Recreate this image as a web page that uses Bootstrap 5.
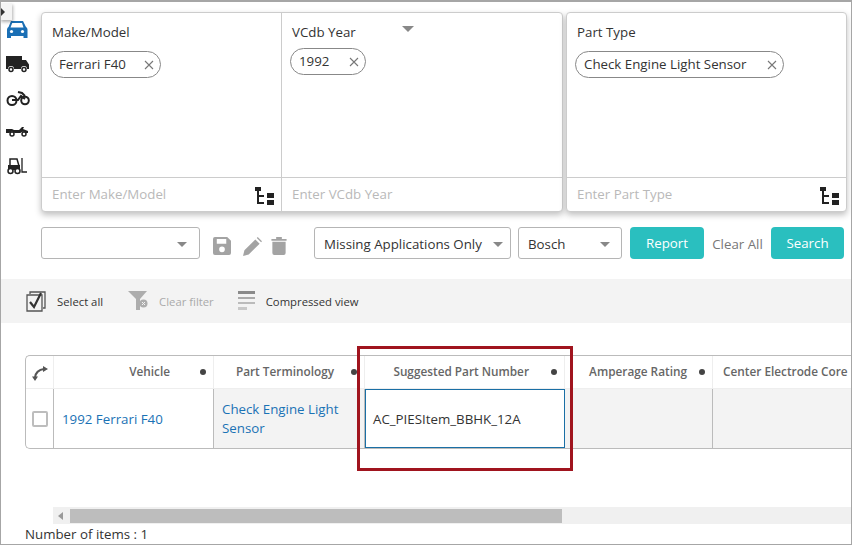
<!DOCTYPE html>
<html lang="en">
<head>
  <meta charset="UTF-8">
  <title>Vehicle Part Search</title>
  <link href="https://cdn.jsdelivr.net/npm/bootstrap@5.3.3/dist/css/bootstrap.min.css" rel="stylesheet">
  <style>
    html,body{height:100%;overflow:hidden;}
    body{background:#fff;font-family:"Open Sans","Liberation Sans",sans-serif;font-size:13.3px;color:#333;}
    .app-frame{position:relative;width:852px;height:545px;border:1px solid #a6a6a6;border-top-width:2px;overflow:hidden;}
    .side-tab{position:absolute;left:-1px;top:1px;width:12px;height:17px;background:#f4f4f4;box-shadow:1px 2px 3px rgba(0,0,0,.3);}
    .top-area{padding-top:10px;height:210px;}
    .side-rail{width:40px;flex:none;padding-top:8px;}
    .rail-icon{height:34px;padding-left:5px;}
    .picker-card{height:200px;border:1px solid #ccc;border-radius:4px;box-shadow:0 3px 6px rgba(0,0,0,.25);background:#fff;}
    .card-one{width:522px;}
    .card-two{width:281px;margin-left:3px;}
    .picker-col{display:flex;flex-direction:column;height:100%;}
    .col-make{width:240px;border-right:1px solid #ccc;}
    .col-year{width:280px;}
    .col-part{width:100%;}
    .picker-body{flex:1;padding:9px 8px 0;}
    .picker-label{color:#333;line-height:20px;padding-left:2px;height:20px;}
    .year-label{width:110px;}
    .caret-down{width:0;height:0;border-left:6px solid transparent;border-right:6px solid transparent;border-top:6px solid #888;margin-top:4px;}
    .chip{display:inline-flex;align-items:center;justify-content:space-between;height:27px;border:1px solid #888;border-radius:14px;padding:0 6px 0 8px;color:#333;margin-top:9px;line-height:1;}
    .chip-year{margin-top:6px;}
    .chip-make{width:111px;}
    .chip-y{width:76px;}
    .chip-type{width:209px;}
    .picker-foot{height:34px;border-top:1px solid #ccc;padding:0 7px 0 10px;}
    .picker-foot input{border:0;outline:0;padding:0;flex:1;min-width:0;font-size:13.3px;background:transparent;}
    .picker-foot input::placeholder{color:#b9b9b9;opacity:1;}
    .tree-icon{margin-top:2px;}
    .tool-row{margin-top:15px;height:32px;padding-left:40px;}
    .plain-select{height:32px;font-size:13.3px;color:#333;border:1px solid #b5b5b5;border-radius:3px;padding:3px 20px 0 9px;background-image:none;}
    .select-wrap{position:relative;}
    .select-wrap::after{content:"";position:absolute;top:15px;border-left:5px solid transparent;border-right:5px solid transparent;border-top:5px solid #888;pointer-events:none;}
    .sel-saved{width:159px;}
    .sel-saved::after{right:13px;}
    .sel-missing{width:197px;}
    .sel-missing::after{right:8px;}
    .sel-brand{width:104px;margin-left:7px;}
    .sel-brand::after{right:12px;}
    .icon-set{width:114px;padding:6px 0 0 13px;}
    .tool-pencil{margin-left:12px;}
    .tool-trash{margin-left:9px;}
    .teal-btn{height:32px;background:#2abfbf;color:#fff;border:0;border-radius:4px;font-size:13.3px;padding:1px 0 0;}
    .teal-btn:hover{background:#2abfbf;color:#fff;}
    .btn-report{width:74px;margin-left:8px;}
    .btn-search{width:73px;}
    .clear-all{width:67px;text-align:center;color:#777;padding-top:3px;}
    .filter-band{margin-top:20px;height:44px;background:#f3f3f3;padding-left:25px;font-size:11.3px;color:#333;}
    .band-text{padding:2px 0 0 10px;}
    .band-off{color:#aaa;}
    .band-filter{margin-left:25px;}
    .band-lines{margin-left:24px;}
    .grid-wrap{margin:32px 0 0 24px;height:94px;border:1px solid #bbb;border-right:0;border-radius:5px 0 0 5px;overflow:hidden;}
    .data-grid{table-layout:fixed;width:827px;border-collapse:separate;border-spacing:0;}
    .data-grid th{position:relative;height:33px;padding:0;text-align:right;font-size:11.8px;font-weight:600;color:#666;border-right:1px solid #eee;border-bottom:1px solid #eee;white-space:nowrap;overflow:hidden;vertical-align:middle;}
    .data-grid td{height:59px;padding:0 8px;border-right:1px solid #bbb;vertical-align:middle;line-height:19px;color:#333;}
    .sort-dot{position:absolute;right:7px;top:13px;width:6px;height:6px;border-radius:50%;background:#444;}
    .c-check{width:28px;}.c-vehicle{width:160px;}.c-term{width:151px;}.c-part{width:200px;}.c-amp{width:148px;}.c-center{width:140px;}
    .pr-vehicle{padding-right:43px !important;}
    .pr-term{padding-right:30px !important;}
    .pr-part{padding-right:35px !important;}
    .pr-amp{padding-right:25px !important;}
    .data-grid th.th-center{text-align:left;padding-left:10px;}
    .data-grid th.th-first{text-align:center;}
    .cell-grey{background:#f3f3f3;}
    .data-grid td.cell-active{border:1px solid #1a6fa5;padding-left:7px;}
    .data-grid td.cell-line{padding-top:2px;}
    .data-grid a{color:#1a72b5;text-decoration:none;}
    .fake-check{display:block;width:16px;height:16px;border:2px solid #bdbdbd;border-radius:2px;margin:0 auto;}
    .data-grid td.td-check{padding:0;}
    .scroll-track{margin:58px 0 0 52px;height:17px;background:#f0f0f0;padding:2px 0 1px;}
    .scroll-arrow{width:17px;flex:none;padding-left:5px;}
    .scroll-thumb{width:492px;background:#bdbdbd;}
    .item-count{padding:1px 0 0 24px;line-height:18px;}
    .red-mark{position:absolute;left:356px;top:344px;width:216px;height:125px;border:3px solid #a0141e;pointer-events:none;}
  </style>
</head>
<body>

<div class="app-frame">
  <div class="side-tab d-flex align-items-center">
    <svg width="6" height="8" viewBox="0 0 6 8"><path d="M1 0l4 4-4 4z" fill="#333"/></svg>
  </div>

  <div class="top-area d-flex">
    <div class="side-rail">
      <div class="rail-icon">
        <svg width="22" height="18" viewBox="0 0 22 18"><path fill="#1a6fb5" d="M5 0h12l3 6c1 .5 1.500 1.500 1.500 3v8h-4v-2H5v2H1V9c0-1.500.5-2.500 1.500-3zm1.200 2L4.500 6.500h13L16 2z"/><circle cx="5.500" cy="10.500" r="1.600" fill="#fff"/><circle cx="16.500" cy="10.500" r="1.600" fill="#fff"/></svg>
      </div>
      <div class="rail-icon">
        <svg width="24" height="18" viewBox="0 0 24 18"><path fill="#222" d="M0 1h16v4h4l3 4.500V14h-2a3 3 0 0 0-6 0H8a3 3 0 0 0-6 0H0z"/><circle cx="5" cy="14.500" r="2" fill="#fff" stroke="#222" stroke-width="1.500"/><circle cx="18" cy="14.500" r="2" fill="#fff" stroke="#222" stroke-width="1.500"/></svg>
      </div>
      <div class="rail-icon">
        <svg width="24" height="17" viewBox="0 0 24 17"><g fill="none" stroke="#222" stroke-width="2"><circle cx="6" cy="10.500" r="4.500"/><circle cx="19" cy="10.500" r="3.800"/><path d="M6 10h6l3-4 4 3M12 2l4 1 3 3"/></g></svg>
      </div>
      <div class="rail-icon">
        <svg width="24" height="14" viewBox="0 0 24 14"><path fill="#222" d="M0 4h6l2 1h5l3-3h2l-1 2 5 2v2h-2.500a3 3 0 0 0-5 0H8.500a3 3 0 0 0-5 0H0z"/><circle cx="6" cy="9" r="2" fill="#fff" stroke="#222" stroke-width="1.500"/><circle cx="18" cy="9" r="2" fill="#fff" stroke="#222" stroke-width="1.500"/></svg>
      </div>
      <div class="rail-icon">
        <svg width="22" height="18" viewBox="0 0 22 18"><g fill="none" stroke="#222" stroke-width="1.500"><path d="M4 9V2h7l2 7"/><path d="M16 1v14h5" stroke-width="1.300"/></g><path fill="#222" d="M2 8h12v5H2z"/><circle cx="4.500" cy="14" r="2.500" fill="#fff" stroke="#222" stroke-width="1.500"/><circle cx="11.500" cy="14" r="2.500" fill="#fff" stroke="#222" stroke-width="1.500"/></svg>
      </div>
    </div>

    <div class="picker-card card-one d-flex">
      <div class="picker-col col-make">
        <div class="picker-body">
          <div class="picker-label">Make/Model</div>
          <span class="chip chip-make">Ferrari F40
            <svg width="10" height="10" viewBox="0 0 10 10"><path d="M1 1l8 8M9 1l-8 8" stroke="#777" stroke-width="1.100"/></svg>
          </span>
        </div>
        <div class="picker-foot d-flex align-items-center">
          <input type="text" placeholder="Enter Make/Model">
          <svg class="tree-icon" width="19" height="18" viewBox="0 0 19 18"><path fill="#222" d="M0 0h6v4H0zM2 4h2v13H2zM4 8h5v2H4zM4 15h5v2H4zM12 6h7v5h-7zM12 13h7v5h-7z"/></svg>
        </div>
      </div>
      <div class="picker-col col-year">
        <div class="picker-body">
          <div class="d-flex picker-label">
            <div class="year-label">VCdb Year</div>
            <div class="caret-down"></div>
          </div>
          <span class="chip chip-y chip-year">1992
            <svg width="10" height="10" viewBox="0 0 10 10"><path d="M1 1l8 8M9 1l-8 8" stroke="#777" stroke-width="1.100"/></svg>
          </span>
        </div>
        <div class="picker-foot d-flex align-items-center">
          <input type="text" placeholder="Enter VCdb Year">
        </div>
      </div>
    </div>

    <div class="picker-card card-two">
      <div class="picker-col col-part">
        <div class="picker-body">
          <div class="picker-label">Part Type</div>
          <span class="chip chip-type">Check Engine Light Sensor
            <svg width="10" height="10" viewBox="0 0 10 10"><path d="M1 1l8 8M9 1l-8 8" stroke="#777" stroke-width="1.100"/></svg>
          </span>
        </div>
        <div class="picker-foot d-flex align-items-center">
          <input type="text" placeholder="Enter Part Type">
          <svg class="tree-icon" width="19" height="18" viewBox="0 0 19 18"><path fill="#222" d="M0 0h6v4H0zM2 4h2v13H2zM4 8h5v2H4zM4 15h5v2H4zM12 6h7v5h-7zM12 13h7v5h-7z"/></svg>
        </div>
      </div>
    </div>
  </div>

  <div class="tool-row d-flex align-items-center">
    <div class="select-wrap sel-saved">
      <select class="form-select plain-select"><option></option></select>
    </div>
    <div class="icon-set d-flex align-items-center">
      <svg width="18" height="18" viewBox="0 0 19 19"><path fill="#a3a3a3" fill-rule="evenodd" d="M2 0h13l4 4v13a2 2 0 0 1-2 2H2a2 2 0 0 1-2-2V2a2 2 0 0 1 2-2zm2 2v5h10V2zm5.500 8a3 3 0 1 0 0 6 3 3 0 0 0 0-6z"/></svg>
      <svg class="tool-pencil" width="19" height="19" viewBox="0 0 20 20"><path fill="#a3a3a3" d="M0 20l1.500-6L13 2.500l4.500 4.500L6 18.500zM14.500 1l1-1L20 4.500l-1 1z"/></svg>
      <svg class="tool-trash" width="16" height="18" viewBox="0 0 16 19"><path fill="#a3a3a3" d="M0 2h5V0h6v2h5v2H0zM1 5h14v12a2 2 0 0 1-2 2H3a2 2 0 0 1-2-2z"/></svg>
    </div>
    <div class="select-wrap sel-missing">
      <select class="form-select plain-select"><option>Missing Applications Only</option></select>
    </div>
    <div class="select-wrap sel-brand">
      <select class="form-select plain-select"><option>Bosch</option></select>
    </div>
    <button class="btn teal-btn btn-report" type="button">Report</button>
    <span class="clear-all">Clear All</span>
    <button class="btn teal-btn btn-search" type="button">Search</button>
  </div>

  <div class="filter-band d-flex align-items-center">
    <svg width="21" height="21" viewBox="0 0 21 21"><g fill="none" stroke="#555" stroke-width="1.300"><path d="M4 3V1h15v16h-2"/><path d="M1 4h15v16H1z" fill="#f3f3f3"/></g><path d="M4 11l4 5 7-14" fill="none" stroke="#333" stroke-width="2.200"/></svg>
    <span class="band-text">Select all</span>
    <svg class="band-filter" width="21" height="20" viewBox="0 0 21 20"><path fill="#adadad" d="M0 0h19l-7 8v11H8V8z"/><circle cx="15.500" cy="12.500" r="4" fill="#adadad"/><path d="M14 11l3 3M17 11l-3 3" stroke="#f3f3f3" stroke-width="1"/></svg>
    <span class="band-text band-off">Clear filter</span>
    <svg class="band-lines" width="18" height="20" viewBox="0 0 18 20"><path fill="#8a8a8a" d="M0 0h17v3H0z"/><path fill="#aaa" d="M0 6h17v2H0z"/><path fill="#bbb" d="M0 11h17v2H0z"/><path fill="#c8c8c8" d="M0 16h9v3H0z"/></svg>
    <span class="band-text">Compressed view</span>
  </div>

  <div class="grid-wrap">
    <table class="data-grid">
      <colgroup><col class="c-check"><col class="c-vehicle"><col class="c-term"><col class="c-part"><col class="c-amp"><col class="c-center"></colgroup>
      <thead>
        <tr>
          <th class="th-first">
            <svg width="16" height="15" viewBox="0 0 16 15"><path fill="none" stroke="#555" stroke-width="2.200" d="M3 12C3 7 7 3.500 12 3"/><path fill="#555" d="M11 0l5 3-5 3zM0 10.500h6L3 15z"/></svg>
          </th>
          <th class="pr-vehicle">Vehicle<span class="sort-dot"></span></th>
          <th class="pr-term">Part Terminology<span class="sort-dot"></span></th>
          <th class="pr-part">Suggested Part Number<span class="sort-dot"></span></th>
          <th class="pr-amp">Amperage Rating<span class="sort-dot"></span></th>
          <th class="th-center">Center Electrode Core Material</th>
        </tr>
      </thead>
      <tbody>
        <tr>
          <td class="td-check"><span class="fake-check"></span></td>
          <td class="ps-2 cell-line"><a href="#">1992 Ferrari F40</a></td>
          <td class="cell-grey"><a href="#">Check Engine Light Sensor</a></td>
          <td class="cell-active cell-line">AC_PIESItem_BBHK_12A</td>
          <td class="cell-grey"></td>
          <td class="cell-grey"></td>
        </tr>
      </tbody>
    </table>
  </div>

  <div class="scroll-track d-flex">
    <div class="scroll-arrow d-flex align-items-center">
      <svg width="5" height="8" viewBox="0 0 5 8"><path d="M5 0v8L0 4z" fill="#999"/></svg>
    </div>
    <div class="scroll-thumb"></div>
  </div>
  <div class="item-count">Number of items : 1</div>

  <div class="red-mark"></div>
</div>

<script src="https://cdn.jsdelivr.net/npm/bootstrap@5.3.3/dist/js/bootstrap.bundle.min.js"></script>
</body>
</html>
